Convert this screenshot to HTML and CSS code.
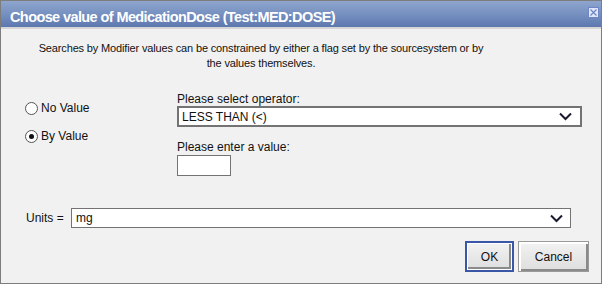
FILE: index.html
```html
<!DOCTYPE html>
<html>
<head>
<meta charset="utf-8">
<link rel="stylesheet" href="styles.css">
</head>
<body>
<div class="dialog">
  <div class="titlebar">
    <span class="title">Choose value of MedicationDose (Test:MED:DOSE)</span>
    <span class="close">
      <svg width="11" height="11" viewBox="0 0 11 11"><rect x="0.5" y="0.5" width="10" height="10" fill="#dfe6f7" stroke="#6f86c6"/><path d="M2.5 2.5L8.5 8.5M8.5 2.5L2.5 8.5" stroke="#6f86c6" stroke-width="1.2"/></svg>
    </span>
  </div>
  <div class="sep"></div>
  <div class="content">
    <p class="desc">Searches by Modifier values can be constrained by either a flag set by the sourcesystem or by<br>the values themselves.</p>
    <div class="main">
      <div class="radios">
        <label class="radio"><span class="circle"></span>No Value</label>
        <label class="radio"><span class="circle checked"></span>By Value</label>
      </div>
      <div class="fields">
        <div class="label">Please select operator:</div>
        <div class="select op">
          <span>LESS THAN (&lt;)</span>
          <svg class="chev" width="13" height="9" viewBox="0 0 13 9"><path d="M1 1.5L6.5 7L12 1.5" fill="none" stroke="#1a1a2e" stroke-width="2"/></svg>
        </div>
        <div class="label second">Please enter a value:</div>
        <div class="textbox"></div>
      </div>
    </div>
    <div class="units">
      <span class="ulabel">Units =</span>
      <div class="select unit">
        <span>mg</span>
        <svg class="chev" width="13" height="9" viewBox="0 0 13 9"><path d="M1 1.5L6.5 7L12 1.5" fill="none" stroke="#1a1a2e" stroke-width="2"/></svg>
      </div>
    </div>
    <div class="buttons">
      <div class="btn ok">OK</div>
      <div class="btn cancel">Cancel</div>
    </div>
  </div>
</div>
</body>
</html>
```
FILE: styles.css
```css
html, body {
  margin: 0;
  padding: 0;
  background: #f1f1f1;
}
.dialog {
  width: 602px;
  height: 284px;
  box-sizing: border-box;
  border: 1px solid #7d7d7d;
  background: #f1f1f1;
  font-family: "Liberation Sans", Arial, sans-serif;
  color: #111;
  overflow: hidden;
}
.titlebar {
  height: 26px;
  background: linear-gradient(to bottom, #8ea6cd 0%, #7690c0 50%, #5d78b0 100%);
  display: flex;
  align-items: center;
  justify-content: space-between;
  padding: 0 2px 0 9px;
}
.title {
  color: #fff;
  font-weight: bold;
  font-size: 14.5px;
  letter-spacing: -0.6px;
  padding-top: 5px;
}
.close {
  display: flex;
  align-self: flex-start;
  margin-top: 6px;
}
.sep {
  height: 2px;
  background: #d6d6d6;
}
.content {
  display: flex;
  flex-direction: column;
}
.desc {
  margin: 12px 80px 0 0;
  font-size: 11px;
  letter-spacing: -0.15px;
  line-height: 15px;
  text-align: center;
}
.main {
  display: flex;
  margin-top: 21px;
}
.radios {
  width: 152px;
  padding-left: 24px;
  padding-top: 9px;
  display: flex;
  flex-direction: column;
  gap: 14px;
}
.radio {
  display: flex;
  align-items: center;
  font-size: 12px;
  height: 14px;
}
.circle {
  width: 11px;
  height: 11px;
  border: 1px solid #555;
  border-radius: 50%;
  background: #fff;
  margin-right: 3px;
  position: relative;
}
.circle.checked::after {
  content: "";
  position: absolute;
  left: 3px;
  top: 3px;
  width: 5px;
  height: 5px;
  border-radius: 50%;
  background: #111;
}
.fields {
  display: flex;
  flex-direction: column;
}
.label {
  font-size: 12px;
  line-height: 14px;
}
.label.second {
  margin-top: 13px;
}
.select {
  box-sizing: border-box;
  height: 21px;
  border: 2px solid #737373;
  background: #fff;
  display: flex;
  align-items: center;
  justify-content: space-between;
  font-size: 12px;
  padding: 0 8px 0 3px;
}
.select.op {
  width: 405px;
}
.textbox {
  box-sizing: border-box;
  width: 54px;
  height: 21px;
  border: 1px solid #737373;
  background: #fff;
  margin-top: 1px;
}
.units {
  display: flex;
  align-items: center;
  margin-top: 32px;
  padding-left: 25px;
}
.ulabel {
  font-size: 12px;
  width: 45px;
}
.select.unit {
  width: 500px;
  height: 20px;
  border-width: 1px;
  padding-left: 4px;
  padding-right: 7px;
}
.buttons {
  display: flex;
  justify-content: flex-end;
  gap: 4px;
  margin-top: 13px;
  padding-right: 12px;
}
.btn {
  box-sizing: border-box;
  height: 31px;
  display: flex;
  align-items: center;
  justify-content: center;
  font-size: 12px;
  background: linear-gradient(to bottom, #f2f2f2, #dedede);
}
.ok {
  width: 49px;
  border: 2px solid #3957a6;
  box-shadow: inset 0 0 0 1px #fff, inset -1px -1px 0 2px #8a8a8a;
}
.cancel {
  width: 71px;
  border: 1px solid #9a9a9a;
  box-shadow: inset 1px 1px 0 1px #fff, inset -2px -2px 0 0 #8a8a8a;
}
```
